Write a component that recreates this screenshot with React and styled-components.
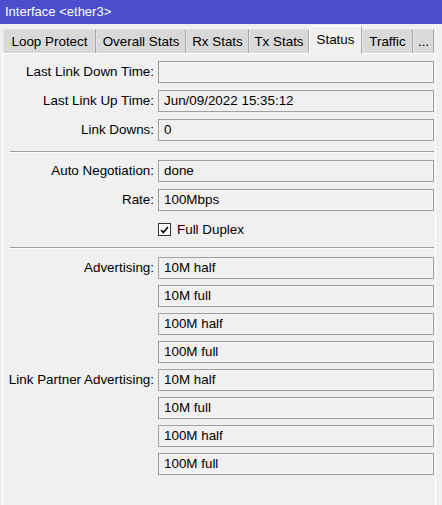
import React from 'react';
import styled, { createGlobalStyle } from 'styled-components';

const GlobalStyle = createGlobalStyle`
  html, body {
    margin: 0;
    padding: 0;
    background: #f0f0f0;
  }
  body {
    font-family: "Liberation Sans", Arial, sans-serif;
    font-size: 13.4px;
    color: #000;
  }
`;

const Window = styled.div`
  width: 442px;
  height: 505px;
  overflow: hidden;
  background: #f0f0f0;
  display: flex;
  flex-direction: column;
`;

const TitleBar = styled.div`
  flex-shrink: 0;
  height: 24px;
  line-height: 24px;
  padding-left: 5px;
  background: #4b4fcc;
  color: #fff;
  font-size: 13px;
`;

const TabStrip = styled.div`
  flex-shrink: 0;
  height: 29px;
  display: flex;
  align-items: flex-end;
  padding-left: 3px;
  position: relative;
  z-index: 1;
`;

const Tab = styled.div`
  box-sizing: border-box;
  width: ${p => p.$w}px;
  height: ${p => (p.$active ? 28 : 24)}px;
  margin-bottom: ${p => (p.$active ? -1 : 0)}px;
  padding-bottom: ${p => (p.$active ? 3 : 0)}px;
  display: flex;
  align-items: center;
  justify-content: center;
  white-space: nowrap;
  background: ${p => (p.$active ? '#f0f0f0' : '#d9d9d9')};
  border-top: 1px solid ${p => (p.$active ? '#fff' : '#e4e4e4')};
  border-left: 1px solid ${p => (p.$active ? '#fff' : '#e4e4e4')};
  border-right: 1px solid #a8a8a8;
`;

const Panel = styled.div`
  flex: 1;
  margin: 0 6px 0 2px;
  padding: 7px 1px 0 0;
  border-top: 1px solid #fff;
  border-left: 1px solid #fff;
  border-right: 1px solid #fff;
  display: flex;
  flex-direction: column;
`;

const Section = styled.div`
  display: flex;
  flex-direction: column;
  gap: ${p => p.$gap}px;
`;

const Row = styled.div`
  display: grid;
  grid-template-columns: 151px 1fr;
  column-gap: 4px;
  align-items: start;
`;

const Label = styled.div`
  height: 22px;
  line-height: 22px;
  text-align: right;
  white-space: nowrap;
`;

const Stack = styled.div`
  display: flex;
  flex-direction: column;
  gap: 6px;
`;

const Field = styled.div`
  box-sizing: border-box;
  height: 22px;
  line-height: 20px;
  padding: 0 5px;
  border: 1px solid #a0a0a0;
  background: #f0f0f0;
  white-space: nowrap;
`;

const Divider = styled.div`
  height: 0;
  border-top: 1px solid #a0a0a0;
  border-bottom: 1px solid #fff;
  margin: ${p => p.$top}px 0 ${p => p.$bottom}px 7px;
`;

const CheckLine = styled.label`
  height: 22px;
  display: flex;
  align-items: center;
  gap: 6px;
`;

const CheckBox = styled.span`
  box-sizing: border-box;
  width: 13px;
  height: 13px;
  margin-top: 1px;
  border: 1px solid #333;
  background: #fff;
  display: flex;
  align-items: center;
  justify-content: center;
`;

const tabs = [
  { name: 'Loop Protect', w: 93 },
  { name: 'Overall Stats', w: 90 },
  { name: 'Rx Stats', w: 63 },
  { name: 'Tx Stats', w: 60 },
  { name: 'Status', w: 53, active: true },
  { name: 'Traffic', w: 51 },
  { name: '...', w: 21 },
];

const speeds = ['10M half', '10M full', '100M half', '100M full'];

const App = () => (
  <>
    <GlobalStyle />
    <Window>
      <TitleBar>Interface &lt;ether3&gt;</TitleBar>
      <TabStrip>
        {tabs.map(t => (
          <Tab key={t.name} $w={t.w} $active={t.active}>{t.name}</Tab>
        ))}
      </TabStrip>
      <Panel>
        <Section $gap={7}>
          <Row>
            <Label>Last Link Down Time:</Label>
            <Field />
          </Row>
          <Row>
            <Label>Last Link Up Time:</Label>
            <Field>Jun/09/2022 15:35:12</Field>
          </Row>
          <Row>
            <Label>Link Downs:</Label>
            <Field>0</Field>
          </Row>
        </Section>

        <Divider $top={10} $bottom={7} />

        <Section $gap={7}>
          <Row>
            <Label>Auto Negotiation:</Label>
            <Field>done</Field>
          </Row>
          <Row>
            <Label>Rate:</Label>
            <Field>100Mbps</Field>
          </Row>
          <Row>
            <div />
            <CheckLine>
              <CheckBox>
                <svg width="9" height="8" viewBox="0 0 9 8">
                  <polyline points="1,4 3.3,6.5 8,1" fill="none" stroke="#000" strokeWidth="1.6" />
                </svg>
              </CheckBox>
              Full Duplex
            </CheckLine>
          </Row>
        </Section>

        <Divider $top={7} $bottom={8} />

        <Section $gap={6}>
          <Row>
            <Label>Advertising:</Label>
            <Stack>
              {speeds.map(s => <Field key={s}>{s}</Field>)}
            </Stack>
          </Row>
          <Row>
            <Label>Link Partner Advertising:</Label>
            <Stack>
              {speeds.map(s => <Field key={s}>{s}</Field>)}
            </Stack>
          </Row>
        </Section>
      </Panel>
    </Window>
  </>
);

export default App;
